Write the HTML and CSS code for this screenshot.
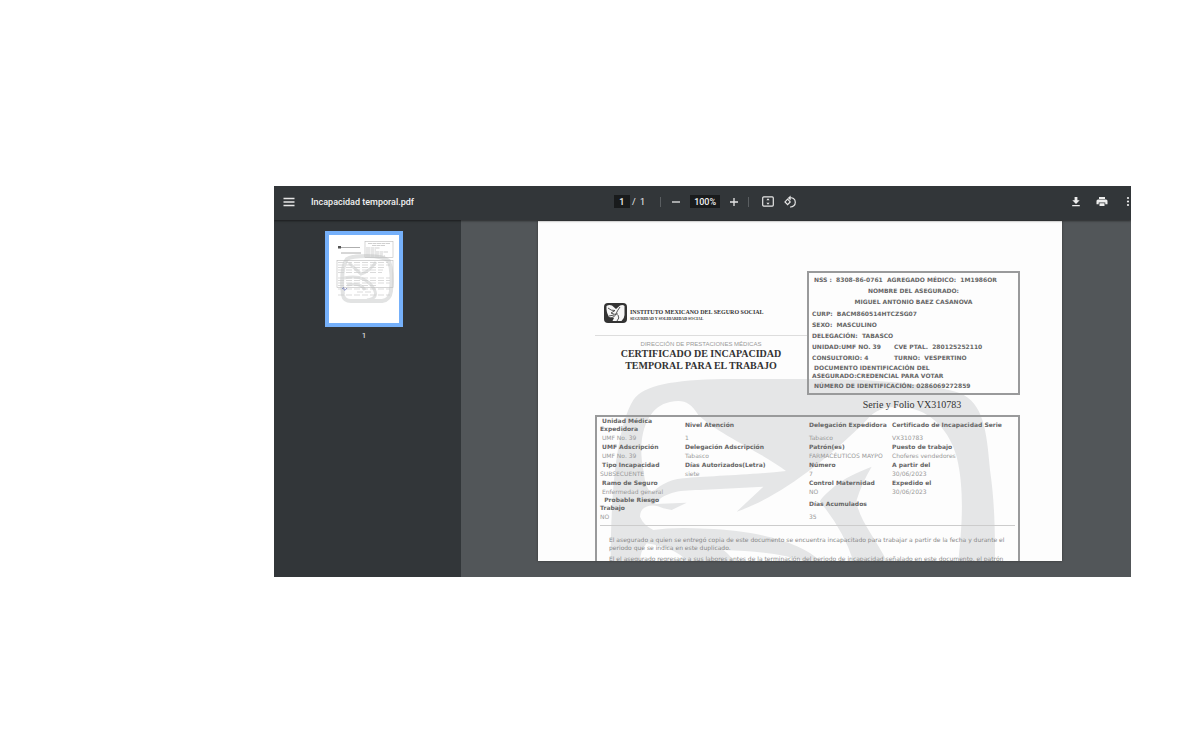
FILE: index.html
```html
<!DOCTYPE html>
<html lang="es">
<head>
<meta charset="utf-8">
<title>Incapacidad temporal.pdf</title>
<link rel="stylesheet" href="styles.css">
</head>
<body>
<div class="viewer">
  <header class="toolbar">
    <div class="bar-start">
      <button class="icon-btn" aria-label="Menú"><svg width="12" height="10" viewBox="0 0 12 10"><path d="M0.500 1.500h11M0.500 5h11M0.500 8.500h11" stroke="#e6e6e6" stroke-width="1.500"/></svg></button>
      <h1 class="file-name">Incapacidad temporal.pdf</h1>
    </div>
    <div class="bar-center">
      <input class="field page-field" aria-label="Página" value="1"><span class="total">/&nbsp; 1</span>
      <span class="divider"></span>
      <button class="icon-btn" aria-label="Alejar"><svg width="10" height="10" viewBox="0 0 10 10"><path d="M1 5h8" stroke="#e6e6e6" stroke-width="1.300"/></svg></button>
      <input class="field zoom-field" aria-label="Zoom" value="100%">
      <button class="icon-btn" aria-label="Acercar"><svg width="10" height="10" viewBox="0 0 10 10"><path d="M1 5h8M5 1v8" stroke="#e6e6e6" stroke-width="1.300"/></svg></button>
      <span class="divider"></span>
      <button class="icon-btn fit" aria-label="Ajustar a la página"><svg width="12" height="11" viewBox="0 0 12 11"><rect x=".7" y=".9" width="10.600" height="9.200" rx="1" fill="none" stroke="#e6e6e6" stroke-width="1.200"/><path d="M6 2.200 7.600 4.200H4.400zM6 8.800 7.600 6.800H4.400z" fill="#e6e6e6"/></svg></button>
      <button class="icon-btn rotate" aria-label="Girar"><svg width="14" height="14" viewBox="0 0 14 14"><g fill="none" stroke="#e6e6e6" stroke-width="1.200"><path d="M4.600 4.200 7.200 6.900 4.600 9.600 2 6.900z"/><path d="M6 3.200C9.500 1.700 12.300 4.300 12.300 7.200c0 3-2.300 5-5.300 4.800"/></g><path d="M7.600.5v5L4.800 3z" fill="#e6e6e6"/></svg></button>
    </div>
    <div class="bar-end">
      <button class="icon-btn" aria-label="Descargar"><svg width="10" height="11" viewBox="0 0 10 11"><path d="M3.600 1h2.800v3.200h2.300L5 7.900 1.300 4.200h2.300zM1.200 9h7.600v1.300H1.200z" fill="#eee"/></svg></button>
      <button class="icon-btn" aria-label="Imprimir"><svg width="12" height="11" viewBox="0 0 12 11"><path d="M3 1h6v2H3zM2 3.500h8Q11.500 3.500 11.500 5v3.300H9.300V6.500H2.700v1.800H.5V5Q.5 3.500 2 3.500zM3.500 7.300h5V10h-5z" fill="#eee"/></svg></button>
      <button class="icon-btn more" aria-label="Más acciones"><svg width="4" height="11" viewBox="0 0 4 11"><circle cx="2" cy="2" r="1.100" fill="#eee"/><circle cx="2" cy="5.500" r="1.100" fill="#eee"/><circle cx="2" cy="9" r="1.100" fill="#eee"/></svg></button>
    </div>
  </header>

  <div class="workspace">
    <nav class="sidebar">
      <button class="thumb" aria-label="Página 1">
        <svg viewBox="0 0 70 88" width="70" height="88">
          <g fill="none" stroke="#e2e3e3">
            <path d="M14 60C12 46 13 31 18 24Q22 21 38 21t22 5q4 12 2 30-1 9-9 10H22q-7 0-8-6z" stroke-width="4"/>
            <path d="M15 43Q34 39 43 51t-5 14M18 50q14-3 18 5M47 27Q40 37 32 39l-12-11" stroke-width="3"/>
          </g>
          <g fill="none" stroke="#bbb" stroke-width=".6"><rect x="36" y="6.500" width="28" height="16"/><rect x="8" y="25.500" width="56" height="27"/></g>
          <rect x="9" y="11" width="3" height="2.500" fill="#555"/>
          <path d="M12 12.500h19M12 18h20" stroke="#999" stroke-width=".8"/>
          <path d="M39 8.500h22M43 10.500h13M37 13h14M37 15h10M37 17h22M37 19h17M37 21h19" stroke="#bbb" stroke-width=".7" stroke-dasharray="4 .5"/>
          <path d="M9 27.500h50M9 30h52M9 32.500h47M9 35h45M9 37.500h44M9 43h52M9 45.500h52M9 48h52M9 50.500h40M9 54h52M28 57h14M9 60h52" stroke="#ccc" stroke-width=".7" stroke-dasharray="6 2"/>
          <path d="M13 54q2-3 2 0t3-1" stroke="#6672b8" stroke-width=".7" fill="none"/>
        </svg>
      </button>
      <span class="thumb-number">1</span>
    </nav>

    <main class="canvas">
      <article class="sheet">
        <svg class="watermark" viewBox="-156 -447 1572 1020" preserveAspectRatio="xMidYMin slice" aria-hidden="true">
          <path fill="#e5e6e7" d="M62 573C62 400 75 180 130 90C160 45 250 30 400 27H700C900 28 1060 50 1110 70C1180 100 1190 180 1200 300C1215 400 1215 500 1215 573Z"/>
          <g fill="#fdfdfd">
            <path d="M160 300C140 200 170 110 240 96C280 88 300 95 325 135C380 190 520 250 588 303C480 315 350 318 280 325C230 330 205 350 185 370C165 350 165 330 160 300Z"/>
            <path d="M150 440C150 405 190 398 220 415L245 420L290 398L195 402C220 370 260 360 330 360L520 350L440 425C560 385 700 280 830 150C860 112 900 108 940 112C1030 120 1080 190 1100 260C1125 360 1115 480 1105 573H890C860 510 800 440 800 390Q815 340 845 290Q770 320 745 340Q690 385 690 395Q760 480 790 573H690C640 520 500 480 350 476Q250 470 190 480Q160 465 150 440Z"/>
            <path d="M150 573Q150 545 170 520Q260 535 290 573Z"/>
            <path d="M430 573Q420 555 400 540Q560 545 640 573Z"/>
          </g>
        </svg>

        <div class="sheet-content">
          <header class="head">
            <section class="brand">
              <div class="logo-row">
                <svg width="23" height="20" viewBox="0 0 23 20"><rect width="23" height="20" rx="4" fill="#333"/><path d="M2.500 3Q5 1.500 8 2.500L12 6l4-3.500q3-1 4.500.5v9q0 3-3 6H8.500L10 15l-5-1Q2 9 2.500 3z" fill="#f6f6f6"/><path d="M4 5q3 3 7 2.500L7 10q3 2 7 1M16 4q-3 4-4 7t-5 4M14 12q2 3-1 6M5 13l5-1" stroke="#444" stroke-width=".9" fill="none"/></svg>
                <div><p class="org">INSTITUTO MEXICANO DEL SEGURO SOCIAL</p><p class="motto">SEGURIDAD Y SOLIDARIDAD SOCIAL</p></div>
              </div>
              <div class="titles">
                <p class="dept">DIRECCIÓN DE PRESTACIONES MÉDICAS</p>
                <h2 class="title">CERTIFICADO DE INCAPACIDAD<br>TEMPORAL PARA EL TRABAJO</h2>
              </div>
            </section>
            <section class="identity">
              <p class="indent">NSS : &nbsp;8308-86-0761 &nbsp;AGREGADO MÉDICO: &nbsp;1M1986OR</p>
              <p class="mid">NOMBRE DEL ASEGURADO:</p>
              <p class="mid">MIGUEL ANTONIO BAEZ CASANOVA</p>
              <p class="after-name">CURP: &nbsp;BACM860514HTCZSG07</p>
              <p>SEXO: &nbsp;MASCULINO</p>
              <p>DELEGACIÓN: &nbsp;TABASCO</p>
              <p class="pair"><span>UNIDAD:UMF NO. 39</span><span>CVE PTAL. &nbsp;280125252110</span></p>
              <p class="pair"><span>CONSULTORIO: 4</span><span>TURNO: &nbsp;VESPERTINO</span></p>
              <p class="double">&nbsp;DOCUMENTO IDENTIFICACIÓN DEL<br>ASEGURADO:CREDENCIAL PARA VOTAR</p>
              <p class="indent">NÚMERO DE IDENTIFICACIÓN: 0286069272859</p>
            </section>
          </header>
          <p class="folio">Serie y Folio VX310783</p>

          <section class="details">
            <table class="data">
              <colgroup><col class="c1"><col class="c2"><col class="c3"><col class="c4"></colgroup>
              <tr class="tall"><th>&nbsp;Unidad Médica<br>Expedidora</th><th>Nivel Atención</th><th>Delegación Expedidora</th><th>Certificado de Incapacidad Serie</th></tr>
              <tr><td>&nbsp;UMF No. 39</td><td>1</td><td>Tabasco</td><td>VX310783</td></tr>
              <tr><th>&nbsp;UMF Adscripción</th><th>Delegación Adscripción</th><th>Patrón(es)</th><th>Puesto de trabajo</th></tr>
              <tr><td>&nbsp;UMF No. 39</td><td>Tabasco</td><td>FARMACÉUTICOS MAYPO</td><td>Choferes vendedores</td></tr>
              <tr><th>&nbsp;Tipo Incapacidad</th><th>Días Autorizados(Letra)</th><th>Número</th><th>A partir del</th></tr>
              <tr><td>SUBSECUENTE</td><td>siete</td><td>7</td><td>30/06/2023</td></tr>
              <tr><th>&nbsp;Ramo de Seguro</th><th></th><th>Control Maternidad</th><th>Expedido el</th></tr>
              <tr><td>&nbsp;Enfermedad general</td><td></td><td>NO</td><td>30/06/2023</td></tr>
              <tr class="tall"><th>&nbsp; Probable Riesgo<br>Trabajo</th><th></th><th>Días Acumulados</th><th></th></tr>
              <tr><td>NO</td><td></td><td>35</td><td></td></tr>
            </table>
            <div class="notes">
              <p>El asegurado a quien se entregó copia de este documento se encuentra incapacitado para trabajar a partir de la fecha y durante el<br>periodo que se indica en este duplicado.</p>
              <p>El el asegurado regresare a sus labores antes de la terminación del periodo de incapacidad señalado en este documento, el patrón</p>
            </div>
          </section>
        </div>
      </article>
    </main>
  </div>
</div>
</body>
</html>
```
FILE: styles.css
```css
* { box-sizing: border-box; }
body {
  margin: 0;
  height: 100vh;
  padding: 186px 69px 173px 274px;
  background: #fff;
  font-family: Roboto, "Liberation Sans", sans-serif;
}
p, h1, h2 { margin: 0; }
svg { display: block; }

.viewer {
  display: flex;
  flex-direction: column;
  height: 100%;
  overflow: hidden;
  background: #525659;
}

/* Toolbar */
.toolbar {
  display: grid;
  grid-template-columns: 1fr auto 1fr;
  align-items: center;
  flex: none;
  height: 34px;
  padding-bottom: 3px;
  background: #323639;
  box-shadow: 0 1px 2px rgba(0, 0, 0, .5);
  z-index: 1;
  color: #f1f1f1;
  font-size: 9px;
}
.bar-start, .bar-center, .bar-end { display: flex; align-items: center; }
.bar-start { gap: 16px; padding-left: 9px; }
.bar-center { padding-left: 6px; }
.bar-end { justify-content: flex-end; gap: 15px; padding-right: 1px; }
.more { margin-left: 3px; }
.file-name { font-size: 9px; font-weight: 500; white-space: nowrap; }
.icon-btn { border: 0; padding: 0; background: none; }
.field {
  height: 13px;
  border: 0;
  padding: 0;
  background: #191b1c;
  color: #f1f1f1;
  font: 500 9px Roboto, sans-serif;
  text-align: center;
}
.page-field { width: 16px; }
.zoom-field { width: 30px; margin: 0 9px; }
.total { margin-left: 2px; }
.divider { width: 1px; height: 10px; margin: 0 10px 0 15px; background: #5a5e61; }
.icon-btn + .divider { margin: 0 13px 0 9px; }
.rotate { margin-left: 9px; }

/* Workspace */
.workspace { display: flex; flex: 1; min-height: 0; }
.sidebar {
  display: flex;
  flex-direction: column;
  align-items: center;
  flex: none;
  width: 187px;
  padding: 11px 7px 0 0;
  background: #323639;
}
.thumb { border: 4px solid #75b0fa; padding: 0; background: #fff; }
.thumb-number { margin-top: 4px; color: #f1f1f1; font-size: 8px; line-height: 10px; }
.canvas { display: flex; flex: 1; min-width: 0; padding: 1px 69px 16px 77px; }
.sheet {
  position: relative;
  flex: 1;
  min-width: 0;
  overflow: hidden;
  background: #fdfdfd;
  box-shadow: 0 0 2px #333;
}
.watermark { position: absolute; inset: 0; width: 100%; height: 100%; }

/* Certificate */
.sheet-content {
  position: relative;
  padding: 50px 42px 0 57px;
  color: #666;
  font-family: "DejaVu Sans", sans-serif;
  font-size: 6px;
}
.head { display: grid; grid-template-columns: 1fr 213px; }
.brand { padding-top: 32px; color: #333; }
.logo-row {
  display: flex;
  align-items: center;
  gap: 3px;
  height: 33px;
  padding: 0 0 12px 9px;
  border-bottom: 1px solid #ddd;
}
.org { padding-top: 2px; font: bold 6px/8px "Liberation Serif", serif; white-space: nowrap; }
.motto { font: bold 4px/5px "Liberation Serif", serif; }
.titles { padding-top: 4px; text-align: center; }
.dept { color: #999; font: 6px/8px "Liberation Sans", sans-serif; }
.title { font: bold 10px/12px "Liberation Serif", serif; white-space: nowrap; }
.identity {
  height: 124px;
  padding: 1px 3px;
  border: 2px solid #999a9b;
  font-weight: bold;
  line-height: 11px;
  white-space: nowrap;
}
.indent { padding-left: 2px; }
.mid { text-align: center; }
.after-name { margin-top: 1px; }
.pair { display: grid; grid-template-columns: 82px 1fr; }
.double { padding-top: 1px; line-height: 8px; }
.folio {
  padding-left: 209px;
  color: #333;
  font: 10px/20px "Liberation Serif", serif;
  text-align: center;
}
.details { min-height: 200px; padding: 0 3px; border: 2px solid #999a9b; }
.data { width: 100%; border-collapse: collapse; table-layout: fixed; }
.data tr { height: 9px; }
.data .tall { height: 16px; }
.data th, .data td { padding: 0; line-height: 8px; text-align: left; white-space: nowrap; }
.data td { color: #999; }
.c1 { width: 85px; }
.c2 { width: 124px; }
.c3 { width: 83px; }
.notes {
  display: grid;
  gap: 3px;
  margin-top: 4px;
  padding: 10px 0 0 9px;
  border-top: 1px solid #ccc;
  color: #888;
  line-height: 8px;
  white-space: nowrap;
}
```
